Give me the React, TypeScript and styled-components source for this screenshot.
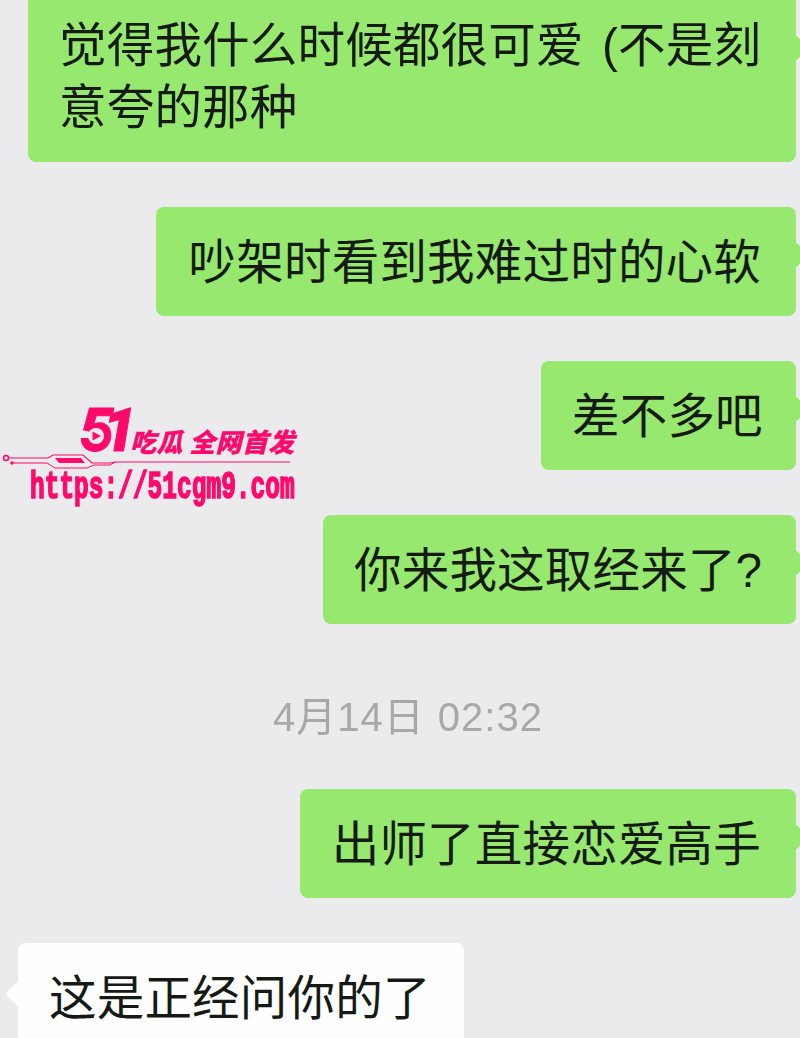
import React from "react";
import styled, { createGlobalStyle } from "styled-components";

const Global = createGlobalStyle`
  html, body { margin: 0; padding: 0; background: #ebebed; }
  body { width: 800px; height: 1038px; overflow: hidden; }
`;

const Page = styled.main`
  position: relative;
  width: 800px;
  height: 1038px;
  overflow: hidden;
  background: #ebebed;
  font-family: "Liberation Sans", "Noto Sans CJK SC", sans-serif;
`;

const Thread = styled.div`
  display: flex;
  flex-direction: column;
  align-items: flex-end;
  gap: 45px;
  margin-top: -9px;
  padding: 0 4px 0 18px;
  filter: blur(0.45px);
`;

const Bubble = styled.div<{ $incoming?: boolean; $wide?: boolean; $width: number }>`
  position: relative;
  align-self: ${(p) => (p.$incoming ? "flex-start" : "flex-end")};
  width: ${(p) => p.$width}px;
  box-sizing: border-box;
  padding: ${(p) => (p.$wide ? "23.5px 35px 23.5px 31px" : "25px 35px 22px 31px")};
  border-radius: 8px;
  background: ${(p) => (p.$incoming ? "#fefefe" : "#96e86e")};
  color: #151a14;
  font-size: 47.5px;
  line-height: 62px;
  letter-spacing: 0.2px;
  word-spacing: 5px;
  white-space: nowrap;
  text-align: ${(p) => (p.$incoming || p.$wide ? "left" : "right")};
  &::after {
    content: "";
    position: absolute;
    top: ${(p) => (p.$wide ? 48 : p.$incoming ? 42 : 39)}px;
    ${(p) => (p.$incoming ? "left: -9px;" : "right: -9px;")}
    width: 18px;
    height: 18px;
    background: inherit;
    transform: rotate(45deg);
    border-radius: 2px;
  }
`;

const Stamp = styled.div`
  align-self: center;
  margin: 26px 0 5px 2px;
  color: #a8a8aa;
  font-size: 40px;
  line-height: 44px;
  letter-spacing: 1px;
  word-spacing: 1px;
  white-space: nowrap;
`;

const Watermark = styled.div`
  position: absolute;
  left: 0;
  top: 408px;
  width: 310px;
  display: flex;
  flex-direction: column;
  color: #ff0a6c;
`;

const Brand = styled.div`
  display: flex;
  align-items: flex-end;
  height: 45px;
  padding-left: 80px;
`;

const Digits = styled.span`
  position: relative;
  display: block;
  flex: none;
  width: 50px;
  height: 45px;
  font: italic 900 60px/45px "Roboto", sans-serif;
  letter-spacing: -11px;
  -webkit-text-stroke: 1px #ff0a6c;
  white-space: nowrap;
`;

const PlayMark = styled.svg`
  position: absolute;
  left: 7px;
  top: 19px;
  width: 18px;
  height: 18px;
`;

const Slogan = styled.span`
  margin: 0 0 -2px 0;
  font: italic 900 26px/29px "Noto Sans CJK SC", sans-serif;
  white-space: pre;
  letter-spacing: 0.4px;
  -webkit-text-stroke: 0.3px #ff0a6c;
`;

const Circuit = styled.svg`
  display: block;
  width: 295px;
  height: 17px;
`;

const Url = styled.div`
  margin-left: 30px;
  width: 265px;
  font: 700 24.5px/24px "Liberation Mono", monospace;
  white-space: nowrap;
  -webkit-text-stroke: 1.1px #ff0a6c;
  transform: scaleY(1.55);
  transform-origin: left top;
`;

export default function App() {
  return (
    <Page>
      <Global />
      <Thread>
        <Bubble $wide $width={768}>
          觉得我什么时候都很可爱 (不是刻
          <br />
          意夸的那种
        </Bubble>
        <Bubble $width={640}>吵架时看到我难过时的心软</Bubble>
        <Bubble $width={255}>差不多吧</Bubble>
        <Bubble $width={473}>你来我这取经来了?</Bubble>
        <Stamp>4月14日 02:32</Stamp>
        <Bubble $width={496}>出师了直接恋爱高手</Bubble>
        <Bubble $incoming $width={446}>这是正经问你的了</Bubble>
      </Thread>
      <Watermark>
        <Brand>
          <Digits>
            51
            <PlayMark viewBox="0 0 18 18">
              <circle cx="9" cy="9" r="8" fill="#ebebed" />
              <path d="M5.5 4.5 L14 9 L5.5 13.5 Z" fill="#ff0a6c" />
            </PlayMark>
          </Digits>
          <Slogan>吃瓜 全网首发</Slogan>
        </Brand>
        <Circuit viewBox="0 0 295 17" fill="none" stroke="#ff0a6c">
          <circle cx="6" cy="5" r="2.5" strokeWidth="1.6" />
          <circle cx="12" cy="10" r="1.7" fill="#ff0a6c" stroke="none" />
          <path d="M8 5 H48 L53 2 H83 L92 10 H110 L115 9 H290" strokeWidth="1.2" />
          <path d="M12 10 H47 L55 15 H87 L94 12 H110 L115 9" strokeWidth="1" />
          <path d="M55 5 H81 L85 10 H59 Z" fill="#ff0a6c" stroke="none" />
        </Circuit>
        <Url>https://51cgm9.com</Url>
      </Watermark>
    </Page>
  );
}
